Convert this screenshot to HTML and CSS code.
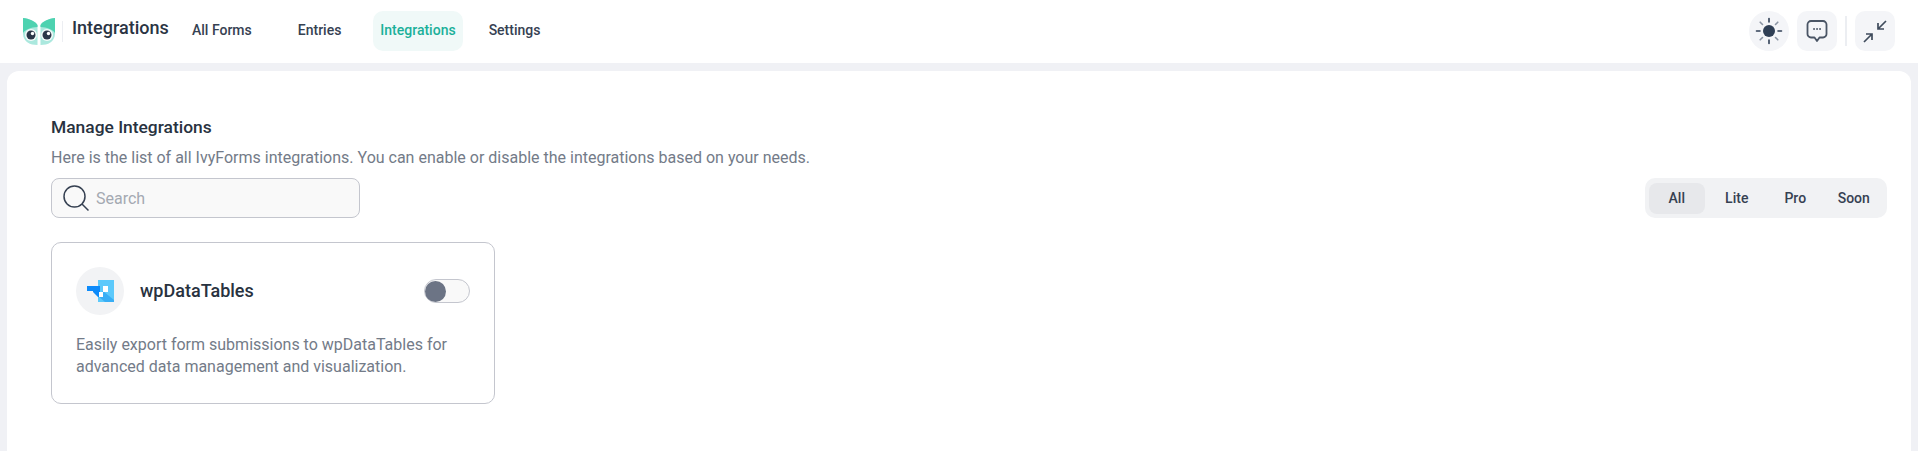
FILE: index.html
```html
<!DOCTYPE html>
<html lang="en">
<head>
<meta charset="utf-8">
<title>Integrations</title>
<link rel="stylesheet" href="styles.css">
</head>
<body>
<header class="topbar">
  <div class="brand">
    <svg class="logo" width="34" height="28" viewBox="0 0 34 28">
      <path d="M1 0C7 .5 13 3 15.500 7V27C8 27 1.500 24 1 16Z" fill="#abe8de"/>
      <path d="M33 0C27 .5 21 3 18.500 7V27C26 27 32.500 24 33 16Z" fill="#abe8de"/>
      <path d="M1 0C7 .5 13 3 15.500 7V9C9 9.500 4 11 1 15Z" fill="#4dd2b0"/>
      <path d="M33 0C27 .5 21 3 18.500 7V9C25 9.500 30 11 33 15Z" fill="#4dd2b0"/>
      <circle cx="9" cy="17" r="6" fill="#f4fbfa"/><circle cx="9" cy="17" r="4.500" fill="#2b3648"/><circle cx="10.500" cy="15.500" r="1.700" fill="#fff"/>
      <circle cx="25" cy="17" r="6" fill="#f4fbfa"/><circle cx="25" cy="17" r="4.500" fill="#2b3648"/><circle cx="26.500" cy="15.500" r="1.700" fill="#fff"/>
    </svg>
    <span class="brand-rule"></span>
    <span class="page-title">Integrations</span>
  </div>
  <nav class="nav">
    <a class="nav-item nav-forms">All Forms</a>
    <a class="nav-item nav-entries">Entries</a>
    <a class="nav-item nav-active">Integrations</a>
    <a class="nav-item nav-settings">Settings</a>
  </nav>
  <div class="actions">
    <button class="icon-btn round">
      <svg width="28" height="28" viewBox="0 0 28 28" fill="none" stroke-width="1.6" stroke-linecap="round">
        <circle cx="14" cy="14" r="6" fill="#2f3f55"/>
        <path d="M14 1.500V5M14 23V26.500M1.500 14H5M23 14H26.500" stroke="#2f3f55"/>
        <path d="M5.200 5.200L7.500 7.500M20.500 20.500L22.800 22.800M5.200 22.800L7.500 20.500M20.500 7.500L22.800 5.200" stroke="#8a94a3"/>
      </svg>
    </button>
    <button class="icon-btn">
      <svg width="24" height="24" viewBox="0 0 24 24" fill="none" stroke="#4a5565" stroke-width="1.8" stroke-linejoin="round">
        <path d="M6 2H18A3.500 3.500 0 0 1 21.500 5.500V15A3.500 3.500 0 0 1 18 18.500H14.500L12 22L9.500 18.500H6A3.500 3.500 0 0 1 2.500 15V5.500A3.500 3.500 0 0 1 6 2Z"/>
        <path d="M9 10H9.100M12 10H12.100M15 10H15.100" stroke-linecap="round"/>
      </svg>
    </button>
    <span class="action-rule"></span>
    <button class="icon-btn">
      <svg width="24" height="24" viewBox="0 0 24 24" fill="none" stroke="#3f4b5c" stroke-width="1.7">
        <path d="M23 2L15 10M15 4V10H21M1 23L9 15M3 15H9V21"/>
      </svg>
    </button>
  </div>
</header>
<main class="panel">
  <h1 class="heading">Manage Integrations</h1>
  <p class="intro">Here is the list of all IvyForms integrations. You can enable or disable the integrations based on your needs.</p>
  <div class="toolbar">
    <label class="search">
      <svg width="28" height="28" viewBox="0 0 28 28" fill="none" stroke="#364152" stroke-width="1.500">
        <circle cx="12.500" cy="12.500" r="10.500"/><path d="M20 20L26.500 26.500"/>
      </svg>
      <span class="search-text">Search</span>
    </label>
    <div class="filters">
      <span class="filter filter-on">All</span>
      <span class="filter">Lite</span>
      <span class="filter">Pro</span>
      <span class="filter">Soon</span>
    </div>
  </div>
  <article class="card">
    <div class="card-head">
      <span class="card-icon">
        <svg width="27" height="22" viewBox="0 0 27 22">
          <path d="M11 0H27V22H11Z" fill="#5cc9fb"/>
          <path d="M16 11L27 20V22H18L11 16Z" fill="#38aef5"/>
          <path d="M0 6H13V17H11L6 12V11H0Z" fill="#0d8bfa"/>
          <path d="M16 6H21V12H16ZM12 12H16V17H12Z" fill="#fff"/>
        </svg>
      </span>
      <span class="card-title">wpDataTables</span>
      <span class="toggle"><span class="knob"></span></span>
    </div>
    <p class="card-text">Easily export form submissions to wpDataTables for advanced data management and visualization.</p>
  </article>
</main>
</body>
</html>
```
FILE: styles.css
```css
* { box-sizing: border-box; }
html, body { margin: 0; height: 100%; overflow: hidden; }
body { background: #f0f1f5; font-family: Roboto, "Liberation Sans", sans-serif; color: #1f2937; }
.topbar { height: 63px; background: #fff; display: flex; align-items: flex-start; padding: 11px 23px 12px; }
.brand { display: flex; align-items: center; width: 161px; height: 40px; }
.logo { display: block; margin: 1px 0 0 -1px; }
.brand-rule { width: 1px; height: 21px; background: #eceef2; margin: 0 9px 0 6px; }
.page-title { font-size: 18px; font-weight: 500; color: #2a3443; margin-top: -7px; }
.nav { display: flex; align-items: center; }
.nav-item { height: 40px; padding: 0 8px 2px; display: flex; align-items: center; font-size: 14px; font-weight: 500; color: #364152; border-radius: 10px; }
.nav-entries { margin-left: 30px; }
.nav-active { margin-left: 24px; padding: 0 7px 2px; background: #f0f9f8; color: #1bb09a; }
.nav-settings { margin-left: 18px; }
.actions { margin-left: auto; display: flex; align-items: center; gap: 8px; }
.icon-btn { width: 40px; height: 40px; border: 0; padding: 0; background: #f4f5f8; border-radius: 10px; display: flex; align-items: center; justify-content: center; }
.round { border-radius: 50%; }
.action-rule { width: 2px; height: 30px; background: #eceef2; }
.panel { margin: 8px 7px 0; height: 400px; background: #fff; border-radius: 12px 12px 0 0; padding: 45px 44px; }
.heading { margin: 0; font-size: 17.4px; line-height: 22px; font-weight: 500; color: #283240; }
.intro { margin: 9px 0 0; font-size: 16px; line-height: 22px; color: #737b88; }
.toolbar { display: flex; justify-content: space-between; align-items: center; margin-top: 9px; }
.search { width: 309px; height: 40px; border: 1px solid #c4c6ce; border-radius: 8px; background: #f9f9f9; display: flex; align-items: center; gap: 6px; padding: 0 10px; }
.search-text { font-size: 16px; color: #a4a9b2; }
.filters { width: 242px; height: 40px; background: #f1f2f4; border-radius: 10px; display: flex; align-items: center; padding: 0 4px; margin-right: -20px; }
.filter { width: 59px; height: 31px; border-radius: 8px; display: flex; align-items: center; justify-content: center; font-size: 14px; font-weight: 500; color: #364152; }
.filter-on { width: 56px; margin-right: 3px; background: #e7e8eb; }
.card { width: 444px; height: 162px; margin-top: 24px; border: 1px solid #c4c6ce; border-radius: 10px; padding: 24px; }
.card-head { display: flex; align-items: center; height: 48px; }
.card-icon { width: 48px; height: 48px; border-radius: 50%; background: #f2f3f5; display: flex; align-items: center; justify-content: center; }
.card-title { margin-left: 16px; margin-bottom: 2px; font-size: 18px; font-weight: 500; color: #283240; }
.toggle { margin-left: auto; width: 46px; height: 24px; border: 1px solid #c4c6ce; border-radius: 12px; background: #f9f9f9; display: flex; align-items: center; }
.knob { display: block; width: 21px; height: 21px; border-radius: 50%; background: #6c7485; }
.card-text { margin: 19px 0 0; font-size: 16px; line-height: 22px; color: #737b88; }
```
